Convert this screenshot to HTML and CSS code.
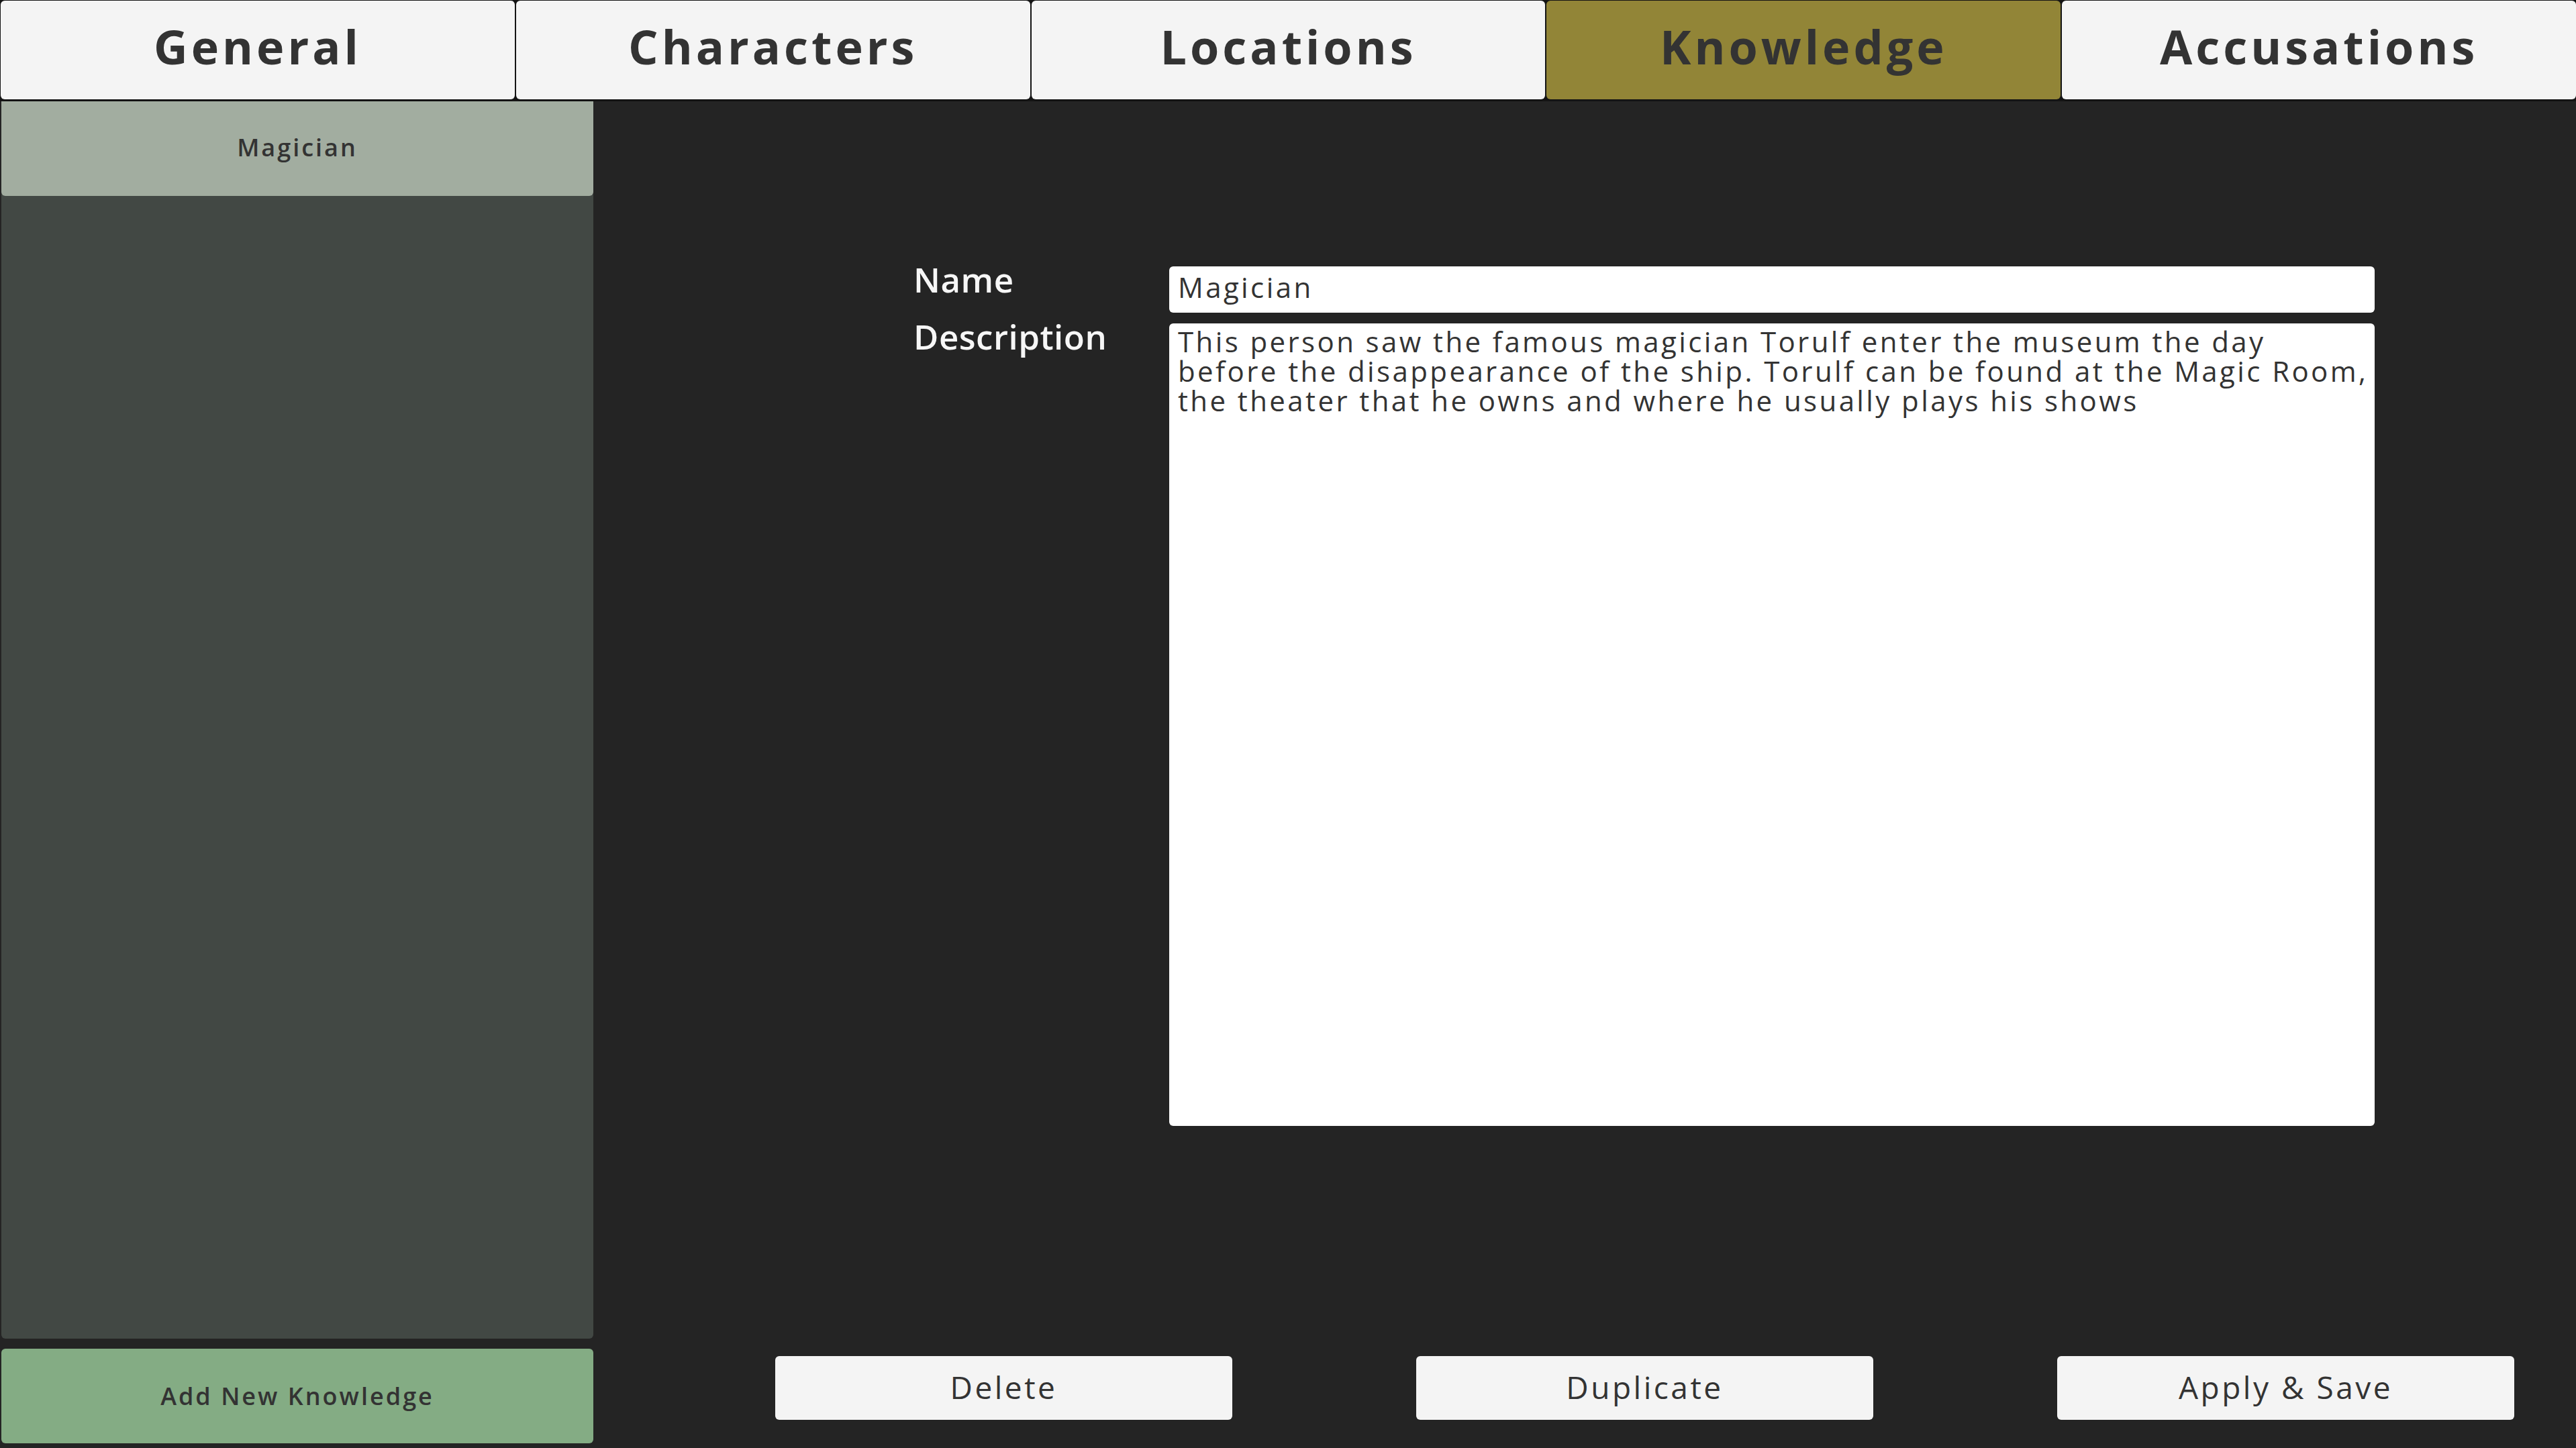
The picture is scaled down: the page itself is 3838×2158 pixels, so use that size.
FILE: index.html
```html
<!DOCTYPE html>
<html lang="en">
<head>
<meta charset="utf-8">
<title>Knowledge</title>
<link rel="stylesheet" href="styles.css">
</head>
<body>
<div class="app">
  <nav class="tabs">
    <div class="tab">General</div>
    <div class="tab">Characters</div>
    <div class="tab">Locations</div>
    <div class="tab active">Knowledge</div>
    <div class="tab">Accusations</div>
  </nav>
  <div class="body">
    <aside class="sidebar">
      <div class="list">
        <div class="item">Magician</div>
      </div>
      <div class="add">Add New Knowledge</div>
    </aside>
    <main class="main">
      <div class="form">
        <label class="label">Name</label>
        <input class="input" type="text" value="Magician">
        <label class="label">Description</label>
        <textarea class="textarea">This person saw the famous magician Torulf enter the museum the day before the disappearance of the ship. Torulf can be found at the Magic Room, the theater that he owns and where he usually plays his shows</textarea>
      </div>
      <div class="actions">
        <button class="btn">Delete</button>
        <button class="btn">Duplicate</button>
        <button class="btn">Apply &amp; Save</button>
      </div>
    </main>
  </div>
</div>
</body>
</html>
```
FILE: styles.css
```css
html, body {
  margin: 0;
  padding: 0;
  height: 100%;
  background: #242424;
  overflow: hidden;
  font-family: "Open Sans", "Noto Sans", sans-serif;
}
.app {
  height: 100vh;
  display: grid;
  grid-template-rows: 151px 1fr;
}
.tabs {
  display: grid;
  grid-template-columns: repeat(5, 1fr);
  gap: 2px;
  padding: 1px 0 3px 1px;
  background: #141414;
}
.tab {
  background: #f4f4f4;
  border-radius: 6px;
  display: flex;
  align-items: center;
  justify-content: center;
  color: #333333;
  font-weight: 700;
  font-size: 70px;
  letter-spacing: 5px;
  padding-bottom: 12px;
  box-sizing: border-box;
}
.tab.active {
  background: #928537;
}
.body {
  display: grid;
  grid-template-columns: 885px 1fr;
  min-height: 0;
}
.sidebar {
  display: flex;
  flex-direction: column;
  padding: 0 1px 7px 2px;
}
.list {
  flex: 1;
  background: #424844;
  border-radius: 0 0 6px 6px;
}
.item {
  height: 141px;
  background: #a2ada0;
  border-radius: 0 0 6px 6px;
  display: flex;
  align-items: center;
  justify-content: center;
  color: #333333;
  font-size: 36px;
  font-weight: 600;
  letter-spacing: 3px;
  padding-bottom: 4px;
  box-sizing: border-box;
}
.add {
  height: 141px;
  margin-top: 15px;
  background: #84ac84;
  border-radius: 6px;
  display: flex;
  align-items: center;
  justify-content: center;
  color: #333333;
  font-size: 36px;
  font-weight: 600;
  letter-spacing: 3px;
}
.main {
  display: flex;
  flex-direction: column;
  min-height: 0;
}
.form {
  padding: 246px 0 0 476px;
  display: grid;
  grid-template-columns: 381px 1796px;
  grid-template-rows: 69px 1196px;
  row-gap: 16px;
}
.label {
  color: #f6f6f6;
  font-size: 51px;
  font-weight: 600;
  letter-spacing: 0.5px;
  line-height: 1;
  margin-top: -6px;
}
.input, .textarea {
  box-sizing: border-box;
  width: 100%;
  height: 100%;
  margin: 0;
  border: none;
  border-radius: 6px;
  background: #ffffff;
  color: #333333;
  font-family: "Open Sans", "Noto Sans", sans-serif;
  font-size: 42px;
  letter-spacing: 3.4px;
  outline: none;
}
.input {
  padding: 0 13px 8px;
  line-height: 61px;
}
.textarea {
  resize: none;
  padding: 5px 6px 0 13px;
  line-height: 44px;
  overflow: hidden;
}
.actions {
  margin-top: auto;
  margin-bottom: 42px;
  display: flex;
  gap: 274px;
  padding-left: 270px;
}
.btn {
  width: 681px;
  height: 95px;
  border: none;
  border-radius: 6px;
  background: #f4f4f4;
  color: #333333;
  font-family: "Open Sans", "Noto Sans", sans-serif;
  font-size: 46px;
  letter-spacing: 3.5px;
  padding: 0 0 4px;
}
```
